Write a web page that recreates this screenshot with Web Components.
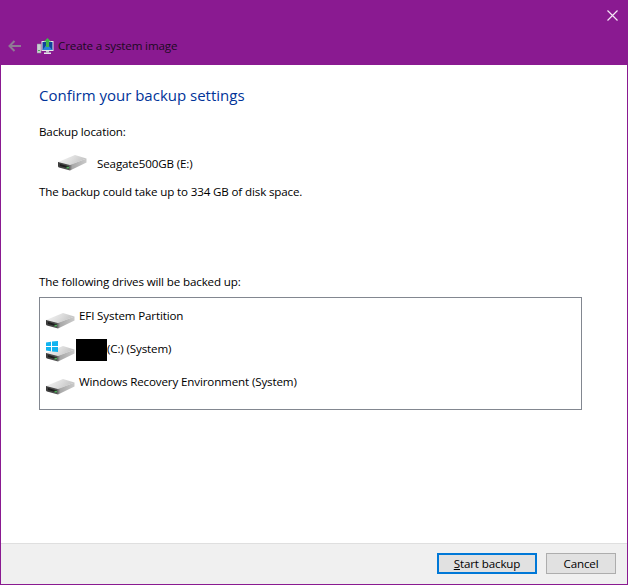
<!DOCTYPE html>
<html lang="en">
  <head>
    <meta charset="UTF-8" />
    <title>Create a system image</title>
    <style>
      html, body { margin: 0; height: 100%; }
      body { font-family: "Open Sans", "Noto Sans", sans-serif; font-size: 11.6px; letter-spacing: -0.14px; color: #000; }
    </style>
  </head>
  <body>
    <template id="drive-svg">
      <svg width="30" height="16" viewBox="0 0 30 16">
        <defs>
          <linearGradient id="top" x1="0" y1="0" x2="1" y2="0.3">
            <stop offset="0" stop-color="#f8f8f8" />
            <stop offset="0.6" stop-color="#dcdcdc" />
            <stop offset="1" stop-color="#c4c4c4" />
          </linearGradient>
          <linearGradient id="front" x1="0" y1="0" x2="1" y2="0">
            <stop offset="0" stop-color="#3a3a3a" />
            <stop offset="0.38" stop-color="#555" />
            <stop offset="0.5" stop-color="#a8a8a8" />
            <stop offset="1" stop-color="#cacaca" />
          </linearGradient>
        </defs>
        <path d="M0 7 L17 0 L28.500 3.500 L12 10 Z" fill="url(#top)" />
        <path d="M0 7 L12 10 L28.500 3.500 V7.500 L12 15.500 L1 12.500 Q0 12 0 11 Z" fill="url(#front)" />
        <path d="M2 9 L11 11.500 V13.500 L2 11 Z" fill="#1c1c1c" />
        <rect x="8.500" y="11.800" width="2.500" height="1.600" fill="#4fae5b" />
      </svg>
    </template>

    <wizard-window>
      <wizard-header slot="header" label="Create a system image"></wizard-header>
      <confirm-page></confirm-page>
      <wizard-footer slot="footer"></wizard-footer>
    </wizard-window>

    <script>
      class WizardWindow extends HTMLElement {
        connectedCallback() {
          const root = this.attachShadow({ mode: 'open' })
          root.innerHTML = `
            <style>
              :host { display: flex; flex-direction: column; box-sizing: border-box; height: 585px; width: 628px;
                border: 1px solid #8a1a91; border-top: 0; background: #fff; }
              main { flex: 1; min-height: 0; }
            </style>
            <slot name="header"></slot>
            <main><slot></slot></main>
            <slot name="footer"></slot>
          `
        }
      }

      class WizardHeader extends HTMLElement {
        connectedCallback() {
          const root = this.attachShadow({ mode: 'open' })
          root.innerHTML = `
            <style>
              :host { display: flex; flex-direction: column; height: 65px; background: #8a1a91; margin: 0 -1px; }
              .close { display: flex; justify-content: flex-end; padding: 10px 10px 0 0; height: 28px; box-sizing: border-box; }
              .bar { display: flex; align-items: center; height: 18px; margin-top: 9px; padding-left: 8px; }
              .back { margin-right: 16px; }
              .icon { margin-right: 4px; }
              span { color: #1b0a1f; line-height: 18px; }
            </style>
            <div class="close">
              <svg width="11" height="11" viewBox="0 0 11 11"><path d="M.5.5l10 10M10.500.5l-10 10" stroke="#f4e6f6" stroke-width="1.200" fill="none" /></svg>
            </div>
            <div class="bar">
              <svg class="back" width="13" height="12" viewBox="0 0 13 12"><path d="M6.500 1L1.500 6l5 5M1.500 6H13" stroke="#8f7a94" stroke-width="2" fill="none" /></svg>
              <svg class="icon" width="17" height="17" viewBox="0 0 17 17">
                <rect x="0" y="6" width="4" height="9" fill="#c9ced2" stroke="#8c9297" stroke-width=".5" />
                <rect x="1" y="12" width="2" height="1" fill="#4fae5b" />
                <rect x="4.500" y="3" width="12" height="10" fill="#e3e7ea" />
                <rect x="5.500" y="4" width="10" height="8" fill="#10429c" />
                <path d="M5.500 12L10 6l5.500 6z" fill="#2b85d8" />
                <rect x="9" y="13" width="3" height="1.500" fill="#c2c7cb" />
                <rect x="7" y="14.500" width="7" height="1.500" fill="#e3e7ea" />
                <path d="M10.500 0L14 3.500h-2V9H9V3.500H7z" fill="#3fb54a" />
              </svg>
              <span>${this.getAttribute('label')}</span>
            </div>
          `
        }
      }

      const windowsLogo = `
        <svg class="win" width="12" height="11" viewBox="0 0 12 11">
          <path d="M0 1.500l5-.8v4.300H0zM6 .6L12 0v5H6zM0 6h5v4.300l-5-.8zM6 6h6v5l-6-.6z" fill="#12b4f0" />
        </svg>`

      class DriveIcon extends HTMLElement {
        connectedCallback() {
          const root = this.attachShadow({ mode: 'open' })
          root.innerHTML = `
            <style>
              :host { display: block; position: relative; width: 30px; height: 16px; }
              svg { display: block; }
              .win { position: absolute; left: 0; top: -5px; }
            </style>
            ${document.getElementById('drive-svg').innerHTML}
            ${this.hasAttribute('system') ? windowsLogo : ''}
          `
        }
      }

      class DriveRow extends HTMLElement {
        connectedCallback() {
          const root = this.attachShadow({ mode: 'open' })
          root.innerHTML = `
            <style>
              :host { display: flex; height: 33px; }
              drive-icon { margin-top: 8px; margin-right: 3px; }
              .text { display: flex; line-height: 18px; padding-top: 2px; white-space: nowrap; }
              .redact { width: 31px; height: 22px; background: #000; margin: -1px 0 0 -3px; }
            </style>
            <drive-icon ${this.hasAttribute('system') ? 'system' : ''}></drive-icon>
            <div class="text">${this.hasAttribute('redacted') ? '<div class="redact"></div>' : ''}<slot></slot></div>
          `
        }
      }

      class ConfirmPage extends HTMLElement {
        connectedCallback() {
          const root = this.attachShadow({ mode: 'open' })
          root.innerHTML = `
            <style>
              :host { display: block; padding: 20px 45px 0 38px; }
              h1 { margin: 0 0 18px; font-size: 15px; font-weight: 400; letter-spacing: 0; line-height: 20px; color: #003399; }
              p { margin: 0; line-height: 18px; }
              .target { display: flex; align-items: center; gap: 9px; margin: 13px 0 11px 19px; height: 18px; }
              .drives { margin-top: 6px; height: 113px; box-sizing: border-box; border: 1px solid #828790; padding: 7px 6px 0; }
            </style>
            <h1>Confirm your backup settings</h1>
            <p>Backup location:</p>
            <div class="target"><drive-icon></drive-icon><span>Seagate500GB (E:)</span></div>
            <p>The backup could take up to 334 GB of disk space.</p>
            <p style="margin-top:72px">The following drives will be backed up:</p>
            <div class="drives">
              <drive-row>EFI System Partition</drive-row>
              <drive-row system redacted>(C:) (System)</drive-row>
              <drive-row>Windows Recovery Environment (System)</drive-row>
            </div>
          `
        }
      }

      class WizardFooter extends HTMLElement {
        connectedCallback() {
          const root = this.attachShadow({ mode: 'open' })
          root.innerHTML = `
            <style>
              :host { display: flex; justify-content: flex-end; gap: 9px; box-sizing: border-box; height: 41px;
                padding: 9px 11px 0 0; background: #f0f0f0; border-top: 1px solid #dfdfdf; }
              button { font: inherit; letter-spacing: inherit; color: #000; background: #e1e1e1; border: 1px solid #adadad; height: 21px; width: 70px; padding: 0; box-sizing: border-box; }
              button.primary { width: 100px; border: 2px solid #0078d7; }
            </style>
            <button class="primary"><u>S</u>tart backup</button>
            <button>Cancel</button>
          `
        }
      }

      window.customElements.define('wizard-window', WizardWindow)
      window.customElements.define('wizard-header', WizardHeader)
      window.customElements.define('drive-icon', DriveIcon)
      window.customElements.define('drive-row', DriveRow)
      window.customElements.define('confirm-page', ConfirmPage)
      window.customElements.define('wizard-footer', WizardFooter)
    </script>
  </body>
</html>
